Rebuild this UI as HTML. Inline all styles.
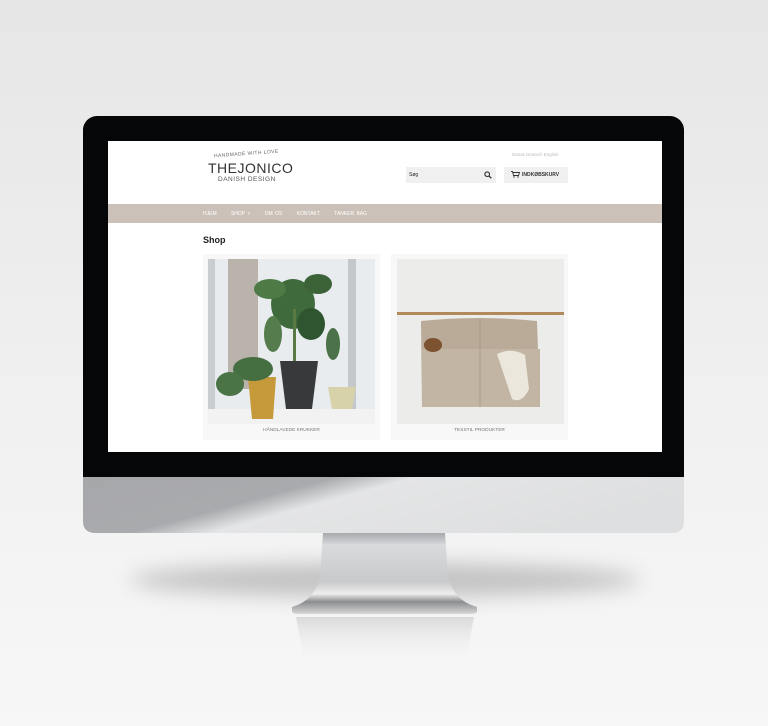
<!DOCTYPE html>
<html><head><meta charset="utf-8"><style>
*{margin:0;padding:0;box-sizing:border-box}
body{width:768px;height:726px;overflow:hidden;background:linear-gradient(#e6e6e6,#f1f1f1 60%,#f7f7f7);position:relative;font-family:"Liberation Sans",sans-serif}
.abs{position:absolute}
</style></head><body>
<div class="abs" style="left:130px;top:563px;width:510px;height:34px;border-radius:50%;background:#9a9a9a;filter:blur(10px);opacity:.55"></div>
<svg class="abs" style="left:0;top:0" width="768" height="726">
<defs>
<linearGradient id="st" x1="0" y1="0" x2="0" y2="1"><stop offset="0" stop-color="#a8a9ac"/><stop offset=".15" stop-color="#d9dadc"/><stop offset=".6" stop-color="#c9cacc"/><stop offset=".75" stop-color="#eeeeee"/><stop offset=".85" stop-color="#8c8d90"/><stop offset="1" stop-color="#d8d8d8"/></linearGradient>
<linearGradient id="ch" x1="0" y1="0" x2="1" y2=".35"><stop offset="0" stop-color="#a6a7aa"/><stop offset=".38" stop-color="#a9aaad"/><stop offset=".5" stop-color="#e4e5e6"/><stop offset="1" stop-color="#dedfe0"/></linearGradient>
<linearGradient id="rf" x1="0" y1="0" x2="0" y2="1"><stop offset="0" stop-color="#dadada"/><stop offset="1" stop-color="#f2f2f2" stop-opacity="0"/></linearGradient>
</defs>
<path d="M323 533 L445 533 L448 575 Q452 600 477 607 L477 612 Q476 614 470 614 L298 614 Q292 614 292 611 L292 607 Q316 600 320 575 Z" fill="url(#st)"/>
<path d="M296 617 L474 617 L466 660 L304 660 Z" fill="url(#rf)"/>
<path d="M83 476 L684 476 L684 521 Q684 533 672 533 L96 533 Q83 533 83 521 Z" fill="url(#ch)"/>
</svg>
<div class="abs" style="left:83px;top:116px;width:601px;height:361px;background:#050608;border-radius:14px 14px 0 0"></div>
<div class="abs" style="left:108px;top:141px;width:554px;height:311px;background:#fff;overflow:hidden">
 <div class="abs" style="left:106px;top:10px;font-size:5px;color:#666;letter-spacing:.4px;transform:rotate(-4deg)">HANDMADE WITH LOVE</div>
 <div class="abs" style="left:100px;top:19px;font-size:14px;color:#333;letter-spacing:.5px">THEJONICO</div>
 <div class="abs" style="left:110px;top:35px;font-size:6.5px;color:#555;letter-spacing:.5px">DANISH DESIGN</div>
 <div class="abs" style="left:404px;top:11px;font-size:4.5px;color:#bbb">Dansk Deutsch English</div>
 <div class="abs" style="left:298px;top:26px;width:90px;height:16px;background:#f0f0f0;font-size:5px;color:#222;padding:5px 3px">Søg
  <svg class="abs" style="right:4px;top:4px" width="8" height="8" viewBox="0 0 8 8"><circle cx="3.2" cy="3.2" r="2.3" fill="none" stroke="#333" stroke-width="1.1"/><path d="M5 5L7.3 7.3" stroke="#333" stroke-width="1.3"/></svg></div>
 <div class="abs" style="left:396px;top:26px;width:64px;height:16px;background:#f0f0f0;font-size:5px;color:#333;padding:5px 0 0 18px;font-weight:bold">INDKØBSKURV
  <svg class="abs" style="left:7px;top:4px" width="9" height="7" viewBox="0 0 9 7"><path d="M0 .5H1.5L2.5 4.5H7.5L8.5 1.5H2" fill="none" stroke="#333" stroke-width=".9"/><circle cx="3" cy="6" r=".7" fill="#333"/><circle cx="7" cy="6" r=".7" fill="#333"/></svg></div>
 <div class="abs" style="left:0;top:63px;width:554px;height:19px;background:#cbc1b8;font-size:5px;color:#fff;padding:7px 0 0 95px;word-spacing:1px">HJEM&nbsp;&nbsp;&nbsp;&nbsp;&nbsp; SHOP ˅&nbsp;&nbsp;&nbsp;&nbsp;&nbsp; OM OS&nbsp;&nbsp;&nbsp;&nbsp;&nbsp; KONTAKT&nbsp;&nbsp;&nbsp;&nbsp;&nbsp; TANKER BAG</div>
 <div class="abs" style="left:95px;top:94px;font-size:9px;font-weight:bold;color:#222">Shop</div>
 <div class="abs" style="left:95px;top:113px;width:177px;height:186px;background:#f8f8f8"></div>
 <svg class="abs" style="left:100px;top:118px" width="167" height="165" viewBox="0 0 167 165">
  <rect width="167" height="165" fill="#e8ecee"/>
  <rect x="20" y="0" width="30" height="130" fill="#b9b3ab"/>
  <rect x="0" y="0" width="7" height="165" fill="#c9cdd0"/>
  <rect x="140" y="0" width="8" height="165" fill="#c4c8cc"/>
  <rect x="0" y="150" width="167" height="15" fill="#f2f2f2"/>
  <ellipse cx="85" cy="45" rx="22" ry="25" fill="#3f6a3c"/>
  <ellipse cx="62" cy="30" rx="16" ry="10" fill="#4d7a45"/>
  <ellipse cx="110" cy="25" rx="14" ry="10" fill="#3c6337"/>
  <ellipse cx="103" cy="65" rx="14" ry="16" fill="#2f5530"/>
  <ellipse cx="65" cy="75" rx="9" ry="18" fill="#557c4d"/>
  <ellipse cx="125" cy="85" rx="7" ry="16" fill="#4b7248"/>
  <rect x="85" y="50" width="3" height="60" fill="#5a7a45"/>
  <path d="M72 102 H110 L104 150 H78 Z" fill="#37393a"/>
  <path d="M40 118 H68 L65 160 H44 Z" fill="#c69a3a"/>
  <ellipse cx="45" cy="110" rx="20" ry="12" fill="#456f40"/>
  <ellipse cx="22" cy="125" rx="14" ry="12" fill="#4a7346"/>
  <path d="M120 128 H148 L144 150 H124 Z" fill="#d8d2aa"/>
 </svg>
 <div class="abs" style="left:95px;top:287px;width:177px;text-align:center;font-size:4.8px;color:#777">HÅNDLAVEDE KRUKKER</div>
 <div class="abs" style="left:283px;top:113px;width:177px;height:186px;background:#f8f8f8"></div>
 <svg class="abs" style="left:289px;top:118px" width="167" height="165" viewBox="0 0 167 165">
  <rect width="167" height="165" fill="#ececeb"/>
  <rect x="0" y="53" width="167" height="3" fill="#b2895a"/>
  <path d="M24 62 Q82 56 140 62 L143 148 H25 Z" fill="#b9ab98"/>
  <path d="M25 90 H143 V148 H25 Z" fill="#c2b5a3"/>
  <line x1="83" y1="60" x2="83" y2="148" stroke="#a99a85" stroke-width="1"/>
  <ellipse cx="36" cy="86" rx="9" ry="7" fill="#7c5230"/>
  <path d="M100 95 Q115 88 128 96 L132 130 Q125 145 115 140 Z" fill="#ece7dd"/>
 </svg>
 <div class="abs" style="left:283px;top:287px;width:177px;text-align:center;font-size:4.8px;color:#777">TEXSTIL PRODUKTER</div>
</div>
</body></html>
